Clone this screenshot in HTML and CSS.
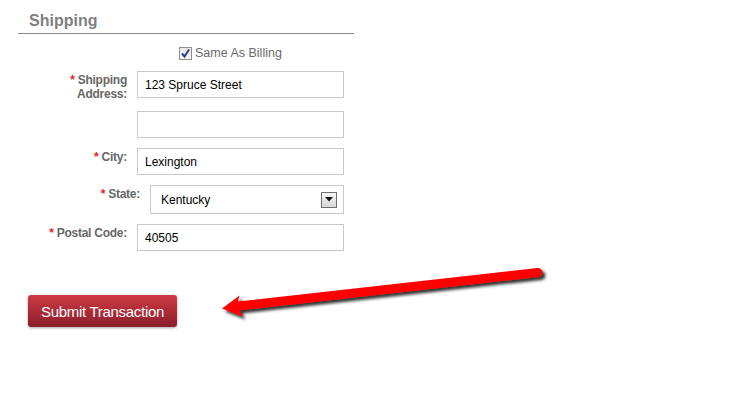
FILE: index.html
```html
<!DOCTYPE html>
<html lang="en">
<head>
    <meta charset="UTF-8">
    <meta name="viewport" content="width=device-width, initial-scale=1.0">
    <title>Shipping</title>
    <link rel="stylesheet" href="styles.css">
</head>
<body>
    <div class="page">
        <div class="shipping">
            <h2 class="section-title">Shipping</h2>

            <div class="same-billing">
                <span class="check-box">
                    <svg width="11" height="11" viewBox="0 0 11 11"><path d="M2 5.5 L4.5 8.5 L9 1.5" fill="none" stroke="#2c3f86" stroke-width="2"/></svg>
                </span>
                <span>Same As Billing</span>
            </div>

            <div class="field-row">
                <label class="field-label"><span class="req">*</span> Shipping<br>Address:</label>
                <input class="text-input" type="text" value="123 Spruce Street">
            </div>
            <div class="field-row">
                <span class="field-label"></span>
                <input class="text-input" type="text" value="">
            </div>
            <div class="field-row">
                <label class="field-label"><span class="req">*</span> City:</label>
                <input class="text-input" type="text" value="Lexington">
            </div>
            <div class="field-row">
                <label class="field-label wide"><span class="req">*</span> State:</label>
                <div class="select-box">
                    <span>Kentucky</span>
                    <span class="select-btn">
                        <svg width="8" height="5" viewBox="0 0 8 5"><path d="M0 0 H8 L4 4.5 Z" fill="#111"/></svg>
                    </span>
                </div>
            </div>
            <div class="field-row">
                <label class="field-label"><span class="req">*</span> Postal Code:</label>
                <input class="text-input" type="text" value="40505">
            </div>
        </div>

        <button class="submit-btn">Submit Transaction</button>

        <!-- annotation arrow drawn over the page -->
        <svg class="pointer-arrow" width="730" height="400" viewBox="0 0 730 400">
            <defs>
                <filter id="arrowShadow" x="-10%" y="-50%" width="120%" height="200%">
                    <feDropShadow dx="3" dy="3" stdDeviation="1.5" flood-color="#000" flood-opacity="0.8"/>
                </filter>
            </defs>
            <g filter="url(#arrowShadow)" fill="#ff0000">
                <line x1="538" y1="272.5" x2="238" y2="306" stroke="#ff0000" stroke-width="9" stroke-linecap="round"/>
                <path d="M222 308.5 L239.5 295.5 L237 305 L242.5 316.5 Z"/>
            </g>
        </svg>
    </div>
</body>
</html>
```

FILE: styles.css
```css
body {
    margin: 0;
    background-color: #fff;
    font-family: 'Liberation Sans', Arial, sans-serif;
}

.page {
    position: relative;
    width: 730px;
    height: 400px;
}

.shipping {
    width: 336px;
    margin-left: 18px;
    padding-top: 11px;
}

.section-title {
    margin: 0;
    padding: 0 0 2px 11px;
    font-size: 16px;
    line-height: 20px;
    font-weight: bold;
    color: #7f7f7f;
    border-bottom: 1px solid #8a8a8a;
}

.same-billing {
    display: flex;
    align-items: center;
    gap: 3px;
    height: 15px;
    margin: 12px 0 10px 161px;
    font-size: 12.5px;
    line-height: 15px;
    color: #6a6a6a;
}

.check-box {
    width: 11px;
    height: 11px;
    border: 1px solid #8e8f8f;
    background: linear-gradient(#e6e6e6, #f8f8f8);
    display: flex;
}

.field-row {
    display: flex;
    gap: 10px;
    margin-bottom: 10px;
}

.field-label {
    width: 109px;
    flex-shrink: 0;
    padding-top: 2px;
    text-align: right;
    font-size: 12px;
    line-height: 14px;
    font-weight: bold;
    letter-spacing: -0.25px;
    color: #676767;
}

.field-label.wide {
    width: 122px;
}

.req {
    color: #ee1c1c;
}

.text-input {
    box-sizing: border-box;
    width: 207px;
    height: 27px;
    margin: 0;
    padding: 0 7px;
    border: 1px solid #c9c9c9;
    font-family: 'Liberation Sans', Arial, sans-serif;
    font-size: 12px;
    color: #000;
    outline: none;
}

.select-box {
    box-sizing: border-box;
    width: 194px;
    height: 29px;
    display: flex;
    align-items: center;
    padding: 0 6px 0 10px;
    border: 1px solid #c9c9c9;
    font-size: 12px;
    color: #000;
}

.select-btn {
    box-sizing: border-box;
    width: 16px;
    height: 16px;
    margin-left: auto;
    border: 1px solid #6f6f6f;
    background: linear-gradient(#f6f6f6, #d6d6d6);
    display: flex;
    align-items: center;
    justify-content: center;
}

.submit-btn {
    display: block;
    box-sizing: border-box;
    width: 149px;
    height: 32px;
    margin: 44px 0 0 28px;
    padding: 0;
    border: none;
    border-radius: 3px;
    background: linear-gradient(#ce3a44, #8b1d2a);
    box-shadow: 0 1px 3px rgba(0, 0, 0, 0.35);
    font-family: 'Liberation Sans', Arial, sans-serif;
    font-size: 15px;
    letter-spacing: -0.3px;
    color: #fff;
    cursor: pointer;
}

.pointer-arrow {
    position: absolute;
    left: 0;
    top: 0;
    pointer-events: none;
}
```
